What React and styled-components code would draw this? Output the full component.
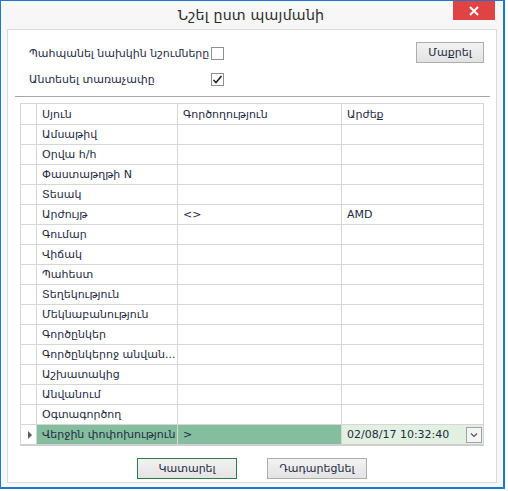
import React from "react";
import styled, { createGlobalStyle } from "styled-components";

const Global = createGlobalStyle`
  html, body { margin: 0; padding: 0; background: #ffffff; }
  body { font-family: "DejaVu Sans", "Noto Sans", sans-serif; }
  * { box-sizing: border-box; }
`;

const Window = styled.div`
  width: 505px;
  height: 489px;
  border: 1px solid #1a7ac9;
  border-right-width: 2px;
  border-bottom-width: 2px;
  background: #f7f7f7;
  display: flex;
  flex-direction: column;
  padding: 0 6px 4px 6px;
`;

const TitleBar = styled.div`
  height: 28px;
  display: grid;
  grid-template-columns: 42px 1fr 42px;
  align-items: start;
  margin-right: 2px;
`;

const Title = styled.div`
  grid-column: 2;
  text-align: center;
  font-size: 14.2px;
  line-height: 29px;
  color: #2b2b2b;
  letter-spacing: 0.2px;
`;

const CloseButton = styled.div`
  grid-column: 3;
  height: 19px;
  background: #e04343;
  display: flex;
  align-items: center;
  justify-content: center;
`;

const Panel = styled.div`
  flex: 1;
  background: #ffffff;
  border: 1px solid #dadada;
  display: flex;
  flex-direction: column;
`;

const TopSection = styled.div`
  display: flex;
  justify-content: space-between;
  align-items: flex-start;
  padding: 12px 12px 0 21px;
`;

const Options = styled.div`
  display: grid;
  grid-template-columns: 182px 13px;
  grid-auto-rows: 20px;
  row-gap: 6px;
  align-items: center;
  margin-top: 1px;
`;

const OptionLabel = styled.span`
  font-size: 11px;
  color: #1e2a44;
  white-space: nowrap;
`;

const Box = styled.span`
  width: 13px;
  height: 13px;
  border: 1px solid #8f8f8f;
  background: #ffffff;
  display: flex;
  align-items: center;
  justify-content: center;
`;

const Button = styled.button`
  height: 21px;
  width: ${(p) => p.$w || 100}px;
  font-family: "DejaVu Sans", sans-serif;
  font-size: 11px;
  color: #1e2a44;
  padding: 0;
  border: 1px solid ${(p) => (p.$primary ? "#2f7a45" : "#adadad")};
  background: linear-gradient(#f2f2f2, #e3e3e3);
  display: flex;
  align-items: center;
  justify-content: center;
`;

const Separator = styled.div`
  height: 1px;
  background: #a6a6a6;
  margin: 7px 6px 0 7px;
`;

const Grid = styled.div`
  margin: 6px 12px 0 12px;
  display: grid;
  grid-template-columns: 16px 141px 164px 1fr;
  border-top: 1px solid #d6d6d6;
  border-left: 1px solid #d6d6d6;
`;

const Cell = styled.div`
  height: ${(p) => (p.$header ? 21 : p.$last ? 21 : 20)}px;
  border-right: 1px solid #d6d6d6;
  border-bottom: ${(p) => (p.$last ? 2 : 1)}px solid ${(p) => (p.$last ? "#cfcfcf" : "#d6d6d6")};
  background: ${(p) => p.$bg || "#ffffff"};
  font-size: 11px;
  color: #1e2a44;
  padding-left: 5px;
  display: flex;
  align-items: center;
  white-space: nowrap;
  overflow: hidden;
  position: relative;
`;

const Indicator = styled.div`
  height: ${(p) => (p.$header ? 21 : p.$last ? 21 : 20)}px;
  border-right: 1px solid #d6d6d6;
  border-bottom: ${(p) => (p.$last ? 2 : 1)}px solid ${(p) => (p.$last ? "#cfcfcf" : "#d6d6d6")};
  background: #ffffff;
  display: flex;
  align-items: center;
  justify-content: center;
`;

const Arrow = styled.span`
  width: 0;
  height: 0;
  border-top: 4px solid transparent;
  border-bottom: 4px solid transparent;
  border-left: 4px solid #5a5a5a;
  margin-left: 2px;
`;

const DropButton = styled.span`
  position: absolute;
  right: 1px;
  top: 2px;
  width: 16px;
  height: 16px;
  border: 1px solid #a3a3a3;
  background: #f4f4f4;
  display: flex;
  align-items: center;
  justify-content: center;
`;

const Footer = styled.div`
  display: flex;
  justify-content: center;
  gap: 30px;
  margin-top: 12px;
`;

const rows = [
  ["Ամսաթիվ", "", ""],
  ["Օրվա հ/հ", "", ""],
  ["Փաստաթղթի N", "", ""],
  ["Տեսակ", "", ""],
  ["Արժույթ", "<>", "AMD"],
  ["Գումար", "", ""],
  ["Վիճակ", "", ""],
  ["Պահեստ", "", ""],
  ["Տեղեկություն", "", ""],
  ["Մեկնաբանություն", "", ""],
  ["Գործընկեր", "", ""],
  ["Գործընկերոջ անվան...", "", ""],
  ["Աշխատակից", "", ""],
  ["Անվանում", "", ""],
  ["Օգտագործող", "", ""],
];

export default function App() {
  return (
    <>
      <Global />
      <Window>
        <TitleBar>
          <Title>Նշել ըստ պայմանի</Title>
          <CloseButton>
            <svg width="10" height="10" viewBox="0 0 10 10">
              <path d="M1 1 L9 9 M9 1 L1 9" stroke="#ffffff" strokeWidth="2" />
            </svg>
          </CloseButton>
        </TitleBar>
        <Panel>
          <TopSection>
            <Options>
              <OptionLabel>Պահպանել նախկին նշումները</OptionLabel>
              <Box />
              <OptionLabel>Անտեսել տառաչափը</OptionLabel>
              <Box>
                <svg width="11" height="11" viewBox="0 0 11 11">
                  <path d="M1.5 6 L4 8.5 L9.5 2" stroke="#222" strokeWidth="1.6" fill="none" />
                </svg>
              </Box>
            </Options>
            <Button $w={68}>Մաքրել</Button>
          </TopSection>
          <Separator />
          <Grid>
            <Indicator $header />
            <Cell $header>Սյուն</Cell>
            <Cell $header>Գործողություն</Cell>
            <Cell $header>Արժեք</Cell>
            {rows.map((r, i) => (
              <React.Fragment key={i}>
                <Indicator />
                <Cell>{r[0]}</Cell>
                <Cell>{r[1]}</Cell>
                <Cell>{r[2]}</Cell>
              </React.Fragment>
            ))}
            <Indicator $last>
              <Arrow />
            </Indicator>
            <Cell $last $bg="#85be9e">Վերջին փոփոխություն</Cell>
            <Cell $last $bg="#85be9e">&gt;</Cell>
            <Cell $last $bg="#e1f0e1">
              02/08/17 10:32:40
              <DropButton>
                <svg width="8" height="6" viewBox="0 0 8 6">
                  <path d="M1 1.5 L4 4.5 L7 1.5" stroke="#555" strokeWidth="1.2" fill="none" />
                </svg>
              </DropButton>
            </Cell>
          </Grid>
          <Footer>
            <Button $primary>Կատարել</Button>
            <Button>Դադարեցնել</Button>
          </Footer>
        </Panel>
      </Window>
    </>
  );
}
